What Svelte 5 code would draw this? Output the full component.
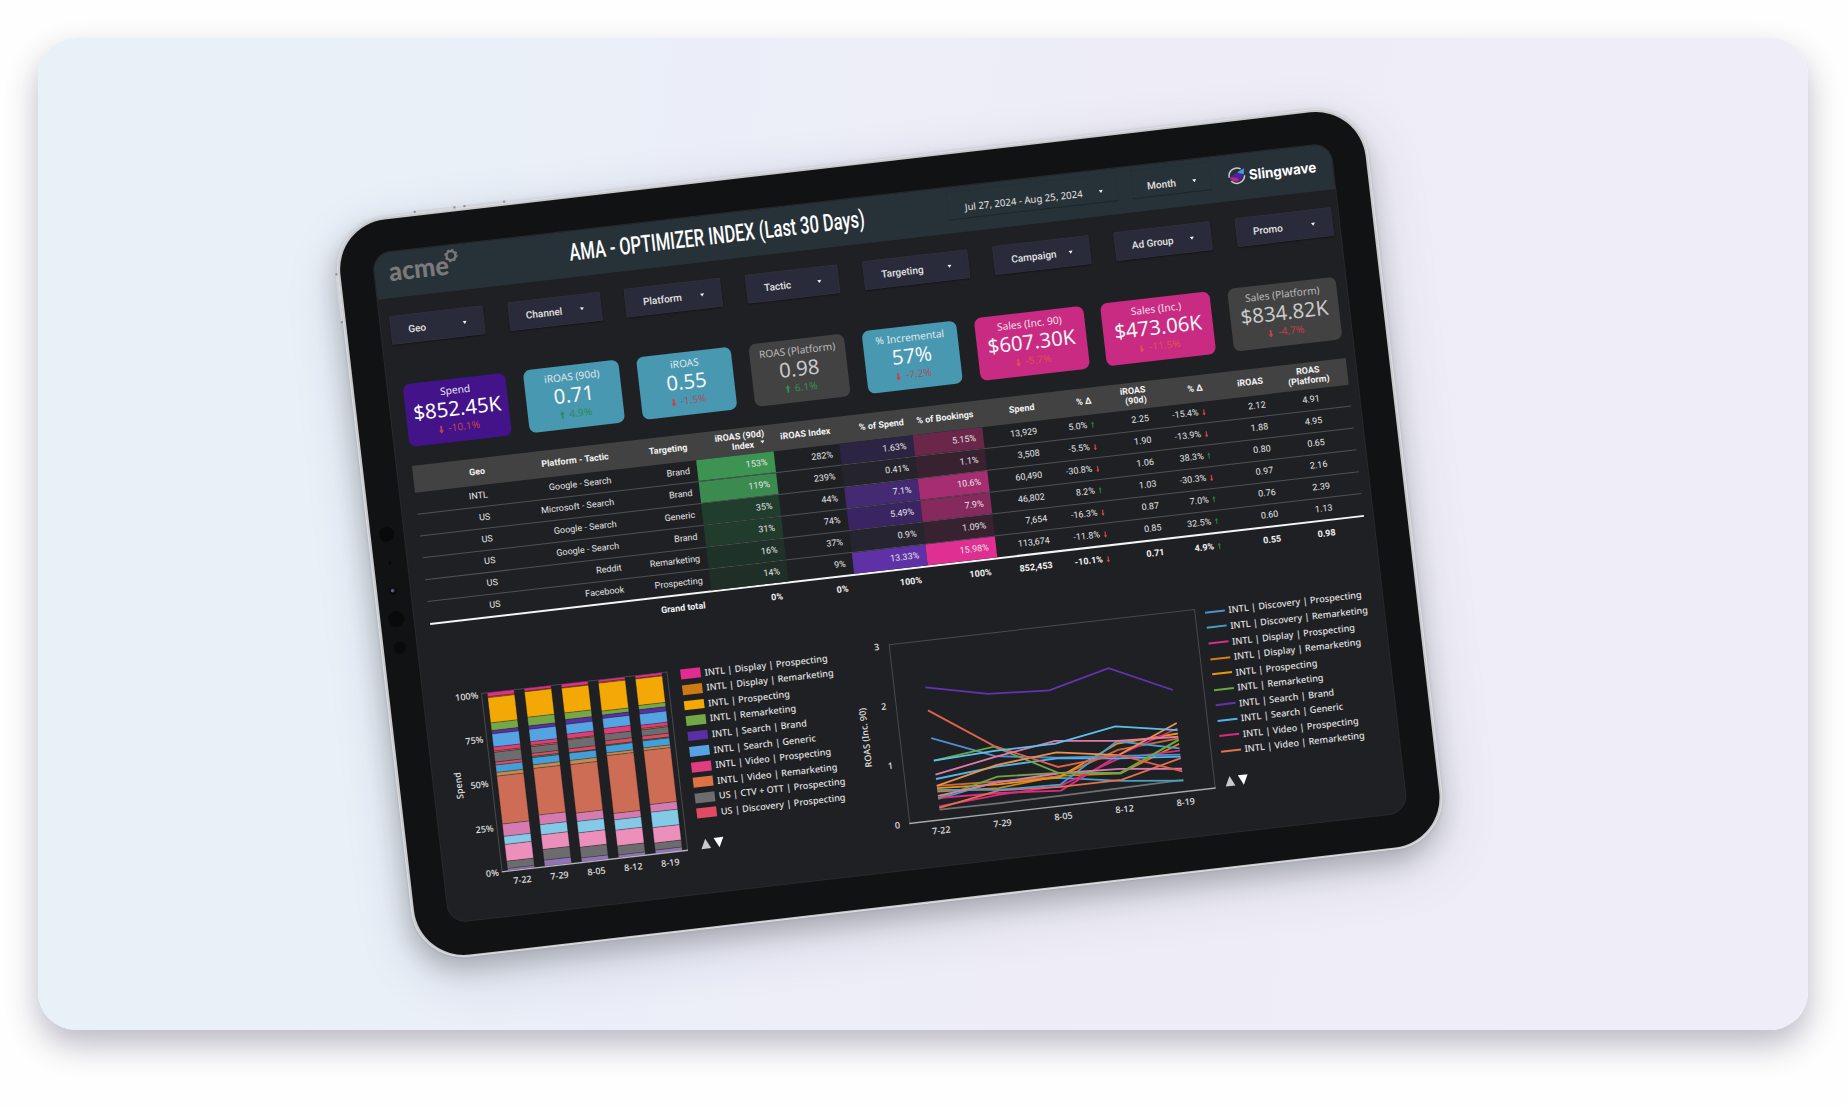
<script lang="ts">
	const filters = [
		{ label: 'Geo', width: 92.5 },
		{ label: 'Channel', width: 92 },
		{ label: 'Platform', width: 96 },
		{ label: 'Tactic', width: 92 },
		{ label: 'Targeting', width: 105 },
		{ label: 'Campaign', width: 95.5 },
		{ label: 'Ad Group', width: 96 },
		{ label: 'Promo', width: 96 }
	];

	const kpis = [
		{ label: 'Spend', value: '$852.45K', delta: '-10.1%', tone: 'purple', width: 103.5 },
		{ label: 'iROAS (90d)', value: '0.71', delta: '4.9%', up: true, tone: 'teal', width: 96 },
		{ label: 'iROAS', value: '0.55', delta: '-1.5%', tone: 'teal', width: 95.5 },
		{ label: 'ROAS (Platform)', value: '0.98', delta: '6.1%', up: true, tone: 'grey', width: 96 },
		{ label: '% Incremental', value: '57%', delta: '-7.2%', tone: 'teal', width: 95.5 },
		{ label: 'Sales (Inc. 90)', value: '$607.30K', delta: '-5.7%', tone: 'pink', width: 110 },
		{ label: 'Sales (Inc.)', value: '$473.06K', delta: '-11.5%', tone: 'pink', width: 109.5 },
		{ label: 'Sales (Platform)', value: '$834.82K', delta: '-4.7%', tone: 'grey', width: 109.5 }
	];

	const rows = [
		['INTL', 'Google - Search', 'Brand', '153%', '282%', '1.63%', '5.15%', '13,929', '5.0%', '2.25', '-15.4%', '2.12', '4.91'],
		['US', 'Microsoft - Search', 'Brand', '119%', '239%', '0.41%', '1.1%', '3,508', '-5.5%', '1.90', '-13.9%', '1.88', '4.95'],
		['US', 'Google - Search', 'Generic', '35%', '44%', '7.1%', '10.6%', '60,490', '-30.8%', '1.06', '38.3%', '0.80', '0.65'],
		['US', 'Google - Search', 'Brand', '31%', '74%', '5.49%', '7.9%', '46,802', '8.2%', '1.03', '-30.3%', '0.97', '2.16'],
		['US', 'Reddit', 'Remarketing', '16%', '37%', '0.9%', '1.09%', '7,654', '-16.3%', '0.87', '7.0%', '0.76', '2.39'],
		['US', 'Facebook', 'Prospecting', '14%', '9%', '13.33%', '15.98%', '113,674', '-11.8%', '0.85', '32.5%', '0.60', '1.13']
	];
	const total = ['', '', 'Grand total', '0%', '0%', '100%', '100%', '852,453', '-10.1%', '0.71', '4.9%', '0.55', '0.98'];

	// heat colours per column index
	const heat: Record<number, string[]> = {
		3: ['#3c9352', '#3b8a4f', '#213d2e', '#213b2d', '#1f322a', '#1f2f28'],
		5: ['#2b2442', '#25232b', '#442a73', '#3a2562', '#26242e', '#5f31a6'],
		6: ['#6a2749', '#382230', '#a62d70', '#862a5e', '#382230', '#e02f92']
	};

	const segColors = [
		'#e22d90', '#b8741a', '#f4a805', '#74a844', '#5b2fa3', '#56a3e3', '#e03c78', '#c96a3c', '#6d6d6f',
		'#dc4a60', '#3f8a55', '#459fd6', '#c08a50', '#cd6d55', '#d67bb0', '#84cae6', '#ec8fba', '#6c6c6e', '#9273b5'
	];
	const bars = [
		[12, 3, 75, 23, 10, 39, 12, 4, 29, 9, 0, 22, 11, 143, 37, 24, 50, 22, 6],
		[8, 2, 76, 26, 10, 37, 11, 4, 20, 9, 4, 21, 11, 139, 29, 30, 44, 32, 18],
		[10, 2, 74, 20, 14, 29, 14, 3, 27, 11, 2, 22, 12, 145, 25, 34, 43, 32, 12],
		[7, 3, 83, 12, 10, 30, 17, 0, 20, 12, 3, 21, 8, 173, 19, 31, 47, 27, 8],
		[8, 2, 79, 13, 13, 33, 10, 4, 19, 11, 3, 21, 8, 161, 23, 46, 46, 21, 10]
	];
	const segments = bars.map((bar) => {
		const sum = bar.reduce((a, b) => a + b, 0);
		let y = 9;
		return bar.map((v, i) => {
			const h = (v / sum) * 179;
			const seg = { y, h, color: segColors[i] };
			y += h;
			return seg;
		});
	});
	const weeks = ['7-22', '7-29', '8-05', '8-12', '8-19'];

	const barLegend = [
		['INTL | Display | Prospecting', '#e22d90'],
		['INTL | Display | Remarketing', '#cc7a16'],
		['INTL | Prospecting', '#f4a805'],
		['INTL | Remarketing', '#74a844'],
		['INTL | Search | Brand', '#5b2fa3'],
		['INTL | Search | Generic', '#56a3e3'],
		['INTL | Video | Prospecting', '#e03c80'],
		['INTL | Video | Remarketing', '#dd7244'],
		['US | CTV + OTT | Prospecting', '#6d6d6f'],
		['US | Discovery | Prospecting', '#e04a62']
	];
	const lineLegend = [
		['INTL | Discovery | Prospecting', '#4f8fd0'],
		['INTL | Discovery | Remarketing', '#45a3c4'],
		['INTL | Display | Prospecting', '#d92d88'],
		['INTL | Display | Remarketing', '#d5800f'],
		['INTL | Prospecting', '#ea960a'],
		['INTL | Remarketing', '#6aa843'],
		['INTL | Search | Brand', '#6433b4'],
		['INTL | Search | Generic', '#52b4ea'],
		['INTL | Video | Prospecting', '#d62c7c'],
		['INTL | Video | Remarketing', '#e2714c']
	];

	// y positions at each week
	const lines = [
		{ color: '#707072', y: [616.7, 617.2, 616.8, 616.2, 615.3] },
		{ color: '#45a3c4', y: [606, 595.5, 599, 609, 615.9] },
		{ color: '#d5800f', y: [598.5, 602.1, 597, 601.5, 579] },
		{ color: '#c96a3c', y: [592.8, 595.5, 597.6, 578, 573.5] },
		{ color: '#ea960a', y: [595.1, 598.5, 598.2, 571.5, 568.5] },
		{ color: '#d92d88', y: [605, 607.1, 611.8, 583.1, 563.5] },
		{ color: '#d62c7c', y: [613.4, 608.8, 607, 586.5, 585.7] },
		{ color: '#e2714c', y: [615, 604.5, 608, 608, 593.3] },
		{ color: '#6aa843', y: [605, 590.6, 594, 600.7, 575] },
		{ color: '#459fd6', y: [596.8, 603.8, 605.8, 569.2, 583.4] },
		{ color: '#4f8fd0', y: [544.8, 570, 578.7, 584, 589.7] },
		{ color: '#52b4ea', y: [585.9, 580.6, 579.4, 586.5, 591.7] },
		{ color: '#d67bb0', y: [602.8, 596.5, 594.3, 597, 604] },
		{ color: '#6aa843', y: [567.3, 560.4, 594.2, 601.4, 574.5] },
		{ color: '#f08f4a', y: [592.8, 579, 573.4, 583.1, 557.9] },
		{ color: '#e2604c', y: [516.8, 559.6, 588, 583, 606.6] },
		{ color: '#e27aa8', y: [581.6, 570.7, 561.8, 568.9, 571.8] },
		{ color: '#5cc0ee', y: [567.3, 564.7, 564.5, 554.3, 565.2] },
		{ color: '#6433b4', y: [493.7, 507.3, 510.9, 495.6, 524.7] }
	];
	const toPoints = (ys: number[]) => ys.map((y, i) => `${74.6 + i * 61.4},${y - 439.7}`).join(' ');
</script>

{#snippet change(value)}
	{value}<svg class="chg" viewBox="0 0 4 7">
		{#if value.startsWith('-')}
			<path d="M2 0.8V5.8M1 4.5L2 6L3 4.5" stroke="#d0454c" />
		{:else}
			<path d="M2 6.2V1.2M1 2.5L2 1L3 2.5" stroke="#2a7242" />
		{/if}
	</svg>
{/snippet}

{#snippet cells(row, index)}
	{#each row as cell, c}
		<div class="cell" class:mid={c === 12} style:background={index >= 0 && heat[c] ? heat[c][index] : null}>
			{#if c === 8 || c === 10}
				{@render change(cell)}
			{:else}
				{cell}
			{/if}
		</div>
	{/each}
{/snippet}

{#snippet pager()}
	<svg class="pager" width="28" height="12" viewBox="0 0 28 12">
		<path d="M5.5 1L10.4 11H0.6Z" fill="#c9c9c9" />
		<path d="M18.8 11.2L23.7 1.2H13.9Z" fill="#ffffff" />
	</svg>
{/snippet}

<div class="page">
	<div class="card">
		<div class="tablet">
			<i class="btn top one"></i>
			<i class="btn top two"></i>
			<i class="btn side"></i>
			<div class="bezel">
				<svg class="sensors" width="20" height="140" viewBox="0 0 20 140">
					<circle cx="10" cy="14" r="7.5" fill="#0a0a0b" />
					<circle cx="10" cy="43" r="1.6" fill="#08080a" />
					<circle cx="10" cy="71" r="4" fill="#0b0b0d" />
					<circle cx="9.6" cy="70.4" r="2" fill="#43485f" />
					<circle cx="9" cy="71" r="0.8" fill="#6f87b4" />
					<circle cx="10" cy="99" r="8" fill="#0a0a0b" />
					<circle cx="10" cy="128" r="6" fill="#0a0a0b" />
				</svg>
				<div class="screen">
					<header>
						<svg class="acme" width="90" height="46" viewBox="0 0 90 46">
							<text x="14.5" y="29" textLength="60" lengthAdjust="spacingAndGlyphs">acme</text>
							<circle cx="78" cy="10.5" r="4.4" fill="none" stroke="#7c797b" stroke-width="2.2" />
							<circle cx="78" cy="10.5" r="5.9" fill="none" stroke="#7c797b" stroke-width="1.4" stroke-dasharray="2.5 2.13" />
						</svg>
						<svg class="title" width="310" height="46" viewBox="0 0 310 46">
							<text x="1" y="29.4" textLength="297" lengthAdjust="spacingAndGlyphs">AMA - OPTIMIZER INDEX (Last 30 Days)</text>
						</svg>
						<div class="picker date">
							<span>Jul 27, 2024 - Aug 25, 2024</span>
							<i class="caret"></i>
						</div>
						<div class="picker month">
							<span>Month</span>
							<i class="caret"></i>
						</div>
						<svg class="sling" width="94" height="46" viewBox="0 0 94 46">
							<path d="M3.2 21.5C5 23 8 17 15.4 18.5C16.6 25 12.5 27.6 9 27.2C5.6 27 3 25 3.2 21.5Z" fill="#4f1fa0" />
							<path d="M2.6 21.4C5 24.5 8.5 21 12 26.4C8 28.4 3 27 2.6 21.4Z" fill="#b12a7c" />
							<path d="M11 18L17.8 15L16.8 21C14.4 19.8 13 20.4 11 18Z" fill="#3f9fd8" />
							<path d="M14.4 15.2A8 8 0 0 0 2 22.6M3.6 26.3A8 8 0 0 0 17.6 22" fill="none" stroke="#c9c9cc" stroke-width="1.5" />
							<text x="22" y="27" textLength="67.5" lengthAdjust="spacingAndGlyphs">Slingwave</text>
						</svg>
					</header>

					<div class="filters">
						{#each filters as f}
							<div class="filter" style:width="{f.width}px">
								<span>{f.label}</span>
								<i class="caret"></i>
							</div>
						{/each}
					</div>

					<div class="kpis">
						{#each kpis as k}
							<div class="kpi {k.tone}" style:width="{k.width}px">
								<div class="kpi-label">{k.label}</div>
								<div class="kpi-value">{k.value}</div>
								<div class="kpi-delta" class:up={k.up}>
									<svg width="5" height="8" viewBox="0 0 5 8">
										{#if k.up}
											<path d="M2.5 7.5V1.5M1.1 3.2L2.5 1.2L3.9 3.2" />
										{:else}
											<path d="M2.5 0.5V6.5M1.1 4.8L2.5 6.8L3.9 4.8" />
										{/if}
									</svg>
									{k.delta}
								</div>
							</div>
						{/each}
					</div>

					<div class="table">
						<div class="row head">
							<div class="cell">Geo</div>
							<div class="cell">Platform - Tactic</div>
							<div class="cell">Targeting</div>
							<div class="cell"><span>iROAS (90d)<br />Index <i class="sort"></i></span></div>
							<div class="cell">iROAS Index</div>
							<div class="cell">% of Spend</div>
							<div class="cell">% of Bookings</div>
							<div class="cell">Spend</div>
							<div class="cell">% Δ</div>
							<div class="cell"><span>iROAS<br />(90d)</span></div>
							<div class="cell">% Δ</div>
							<div class="cell">iROAS</div>
							<div class="cell mid"><span>ROAS<br />(Platform)</span></div>
						</div>
						{#each rows as row, r}
							<div class="row">{@render cells(row, r)}</div>
						{/each}
						<div class="row total">{@render cells(total, -1)}</div>
					</div>

					<div class="charts">
						<svg class="chart" width="250" height="210" viewBox="0 0 250 210">
							<path d="M58 188V9H244.7V188" fill="none" stroke="#4a4a4d" />
							{#each segments as bar, b}
								{#each bar as s}
									{#if s.h > 0}
										<rect x={63.7 + b * 37.2} y={s.y} width="27" height={s.h} fill={s.color} stroke="rgba(20, 20, 24, 0.35)" stroke-width="0.7" />
									{/if}
								{/each}
							{/each}
							<path d="M57.5 188.5H245" stroke="#b5b5b7" stroke-width="1.4" />
							{#each ['100%', '75%', '50%', '25%', '0%'] as t, i}
								<text x="54.5" y={13.5 + i * 44.6} text-anchor="end">{t}</text>
							{/each}
							{#each weeks as w, i}
								<text x={77.3 + i * 37.2} y="202" text-anchor="middle">{w}</text>
							{/each}
							<text transform="translate(28 98) rotate(-90)" text-anchor="middle">Spend</text>
						</svg>
						<div class="legend blocks">
							{#each barLegend as [name, color]}
								<div class="item"><i style:background={color}></i>{name}</div>
							{/each}
							{@render pager()}
						</div>
						<svg class="chart" width="355" height="210" viewBox="0 0 355 210">
							<path d="M43.5 187V7.5H351V187" fill="none" stroke="#4a4a4d" />
							<path d="M43 187.3H351.5" stroke="#a9a9ab" stroke-width="1.4" />
							{#each lines as l}
								<polyline points={toPoints(l.y)} fill="none" stroke={l.color} stroke-width="1.8" />
							{/each}
							{#each [3, 2, 1, 0] as t, i}
								<text x="33.5" y={11.5 + i * 59.8} text-anchor="end">{t}</text>
							{/each}
							{#each weeks as w, i}
								<text x={74 + i * 61.5} y="201" text-anchor="middle">{w}</text>
							{/each}
							<text transform="translate(12.5 97) rotate(-90)" text-anchor="middle">ROAS (Inc. 90)</text>
						</svg>
						<div class="legend strokes">
							{#each lineLegend as [name, color]}
								<div class="item"><i style:background={color}></i>{name}</div>
							{/each}
							{@render pager()}
						</div>
					</div>
				</div>
			</div>
		</div>
	</div>
</div>

<style>
	:global(body) { background: #fefefe; }

	.page {
		box-sizing: border-box;
		width: 1846px;
		height: 1108px;
		padding: 37.5px 38px 78px;
		overflow: hidden;
	}
	.card {
		height: 992.5px;
		border-radius: 38px;
		background: linear-gradient(97deg, #e8f1f8 0%, #e9f0f8 20%, #ebeef8 36%, #eeedf7 58%, #efeef8 100%);
		box-shadow: 0 15px 32px rgba(40, 32, 72, 0.31);
		display: flex;
		align-items: center;
		justify-content: center;
	}

	/* Device */
	.tablet {
		position: relative;
		padding: 1.5px;
		border-radius: 52px;
		background: #c8c9cc;
		border: 1px solid #dfe0e4;
		transform: translate(-33.2px, -0.5px) rotate(-6.6deg);
		box-shadow:
			0 0 3px rgba(120, 122, 130, 0.3),
			-4px 12px 24px rgba(0, 0, 0, 0.2),
			0 18px 56px rgba(40, 45, 70, 0.16);
	}
	.bezel {
		position: relative;
		padding: 33.7px 34.6px;
		border-radius: 50px;
		background: #111213;
	}
	.btn {
		position: absolute;
		background: #d3d4d6;
		border: 0 solid #8a8b8f;
	}
	.btn.top { top: -3.5px; width: 38px; height: 2px; border-width: 0 2px; }
	.btn.one { left: 81.7px; }
	.btn.two { left: 132px; }
	.btn.side { left: -3.5px; top: 50px; width: 2px; height: 46px; border-width: 2px 0; }
	.sensors { position: absolute; left: 6px; top: 299px; }

	.screen {
		box-sizing: border-box;
		width: 963.5px;
		height: 673px;
		border-radius: 18px;
		overflow: hidden;
		background: #1f2024;
		box-shadow: 0 0 0 1px #28292d;
		color: #e4e4e4;
		font-family: Roboto, sans-serif;
	}

	/* Header */
	header {
		display: flex;
		height: 46px;
		background: #273238;
	}
	.acme text {
		font: 900 26.5px Lato, sans-serif;
		fill: #7c797b;
	}
	.title { margin-left: 104.6px; overflow: visible; }
	.title text {
		font: 500 24px Roboto, sans-serif;
		fill: #ffffff;
	}
	.picker {
		box-sizing: border-box;
		display: flex;
		align-items: center;
		justify-content: space-between;
		height: 29px;
		margin-top: 3.5px;
		padding: 6px 14px 0 17.5px;
		border: 1px solid #253036;
		border-bottom-color: #1c2529;
		font: 9.65px "Noto Sans", sans-serif;
	}
	.date { width: 172px; margin-left: 70.9px; }
	.month { width: 80px; margin-left: 14px; padding-left: 15px; font: 500 10px Roboto, sans-serif; }
	.sling { margin-left: 16.5px; }
	.sling text {
		font: 700 14px Inter, sans-serif;
		fill: #ffffff;
	}
	.caret {
		width: 0;
		border: 2.8px solid transparent;
		border-top: 3.2px solid #f2f2f2;
		border-bottom: 0;
	}

	/* Filters */
	.filters {
		display: flex;
		justify-content: space-between;
		padding: 18px 7px 0 10px;
	}
	.filter {
		box-sizing: border-box;
		display: flex;
		align-items: center;
		justify-content: space-between;
		height: 28px;
		padding: 0 17px;
		background: #2a2b3a;
		border-radius: 1px;
		box-shadow: 0 0 0 0.5px #35353f, 0 1px 2px rgba(0, 0, 0, 0.6);
		font-size: 10px;
		font-weight: 500;
	}

	/* KPI tiles */
	.kpis {
		display: flex;
		justify-content: space-between;
		padding: 40.6px 9.5px 0 14.8px;
	}
	.kpi {
		height: 63.5px;
		border-radius: 7px;
		text-align: center;
		white-space: nowrap;
		font-family: "Noto Sans", sans-serif;
		color: #f4f4f6;
	}
	.purple { background: #431389; color: #ffffff; }
	.teal { background: #4798b0; }
	.grey { background: #424242; color: #c9c9c9; }
	.pink { background: #c92b82; }
	.kpi-label {
		padding-top: 4.5px;
		font-size: 10.2px;
		line-height: 14px;
		opacity: 0.88;
	}
	.kpi-value {
		font-size: 20.4px;
		line-height: 23px;
	}
	.kpi-delta {
		font-size: 10.2px;
		line-height: 14px;
		color: #c2414c;
	}
	.kpi-delta svg {
		margin-right: 2px;
		vertical-align: -1px;
		fill: none;
		stroke: currentColor;
		stroke-width: 1.8;
	}
	.kpi-delta.up { color: #348e50; }
	.teal .kpi-delta { color: #a4545c; }
	.teal .kpi-delta svg { color: #d63c46; }
	.teal .kpi-delta.up, .teal .kpi-delta.up svg { color: #2f8a58; }
	.pink .kpi-delta { color: #e2504e; }

	/* Table */
	.table {
		width: 940px;
		margin: 18.9px 0 0 14.5px;
		font-size: 9px;
	}
	.row {
		display: grid;
		grid-template-columns: 79.5px 124.5px 79px 78px 66px 74px 70px 61.5px 57.5px 55px 57px 60.5px 77.5px;
		height: 22px;
		box-sizing: border-box;
		border-bottom: 1px solid #505154;
	}
	.cell {
		display: flex;
		align-items: center;
		justify-content: flex-end;
		padding-right: 7px;
		text-align: right;
		white-space: nowrap;
	}
	.cell.mid {
		justify-content: center;
		padding: 0;
		text-align: center;
	}
	.head {
		height: 26.5px;
		background: #424242;
		border: 0;
		font-weight: 700;
		line-height: 10.5px;
		color: #f2f2f2;
	}
	.row:nth-last-child(2) { height: 23.5px; border-bottom: 2px solid #f5f5f5; }
	.total { border: 0; height: 24px; font-weight: 700; color: #f2f2f2; }
	.sort {
		display: inline-block;
		margin: 0 1px 3px 4px;
		border: 2px solid transparent;
		border-top: 3px solid #f2f2f2;
		border-bottom: 0;
	}
	.chg {
		width: 4px;
		height: 7px;
		margin-left: 3px;
		fill: none;
		stroke-width: 1.2;
	}

	/* Charts */
	.charts {
		display: flex;
		align-items: flex-start;
		margin-top: 41px;
		font-family: "Noto Sans", sans-serif;
	}
	.chart { flex: none; }
	.chart text {
		font-size: 9px;
		font-weight: 500;
		fill: #e2e2e2;
	}
	.legend {
		flex: none;
		font-size: 9.15px;
		font-weight: 500;
		white-space: nowrap;
		color: #e2e2e2;
	}
	.item {
		display: flex;
		align-items: center;
		height: 15.55px;
	}
	.item i { width: 20px; margin-right: 4px; }
	.blocks { width: 167px; margin: 5.4px 0 0 8px; }
	.blocks .item i { height: 9.8px; }
	.strokes { margin: 4px 0 0 5.5px; }
	.strokes .item i { height: 2px; }
	.pager { display: block; margin-top: 16.5px; }
</style>
